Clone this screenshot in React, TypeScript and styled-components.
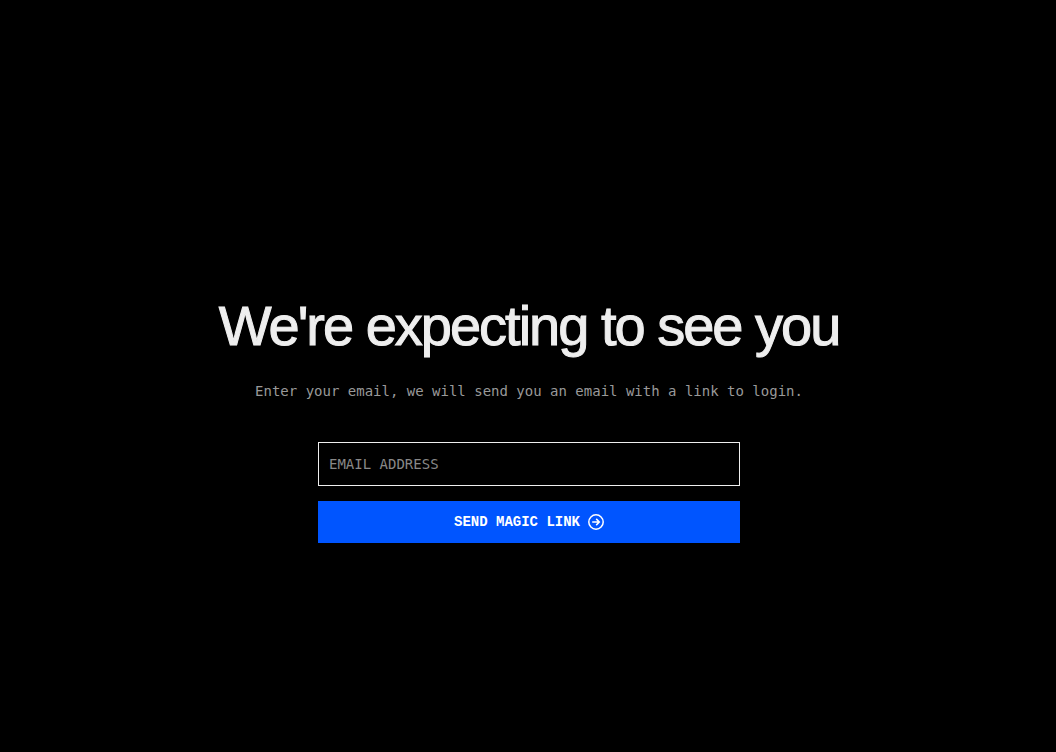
import React from "react";
import styled, { createGlobalStyle } from "styled-components";

const GlobalStyle = createGlobalStyle`
  *, *::before, *::after { box-sizing: border-box; }
  body { margin: 0; background: #000; color: #eee; }
`;

const mono = `"DejaVu Sans Mono", "Liberation Mono", monospace`;

const Page = styled.main`
  min-height: 100vh;
  display: flex;
  flex-direction: column;
  align-items: center;
  justify-content: center;
  padding: 80px 16px 0 18px;
  text-align: center;
`;

const Title = styled.h1`
  margin: 0;
  font: 400 56px/72px "Liberation Sans", Arial, sans-serif;
  letter-spacing: -2px;
  -webkit-text-stroke: 1px #eee;
  color: #eee;
`;

const Lead = styled.p`
  margin: 16px 0 38px;
  font: 400 14px/26px ${mono};
  color: #999;
`;

const Form = styled.form`
  width: 100%;
  max-width: 422px;
  display: flex;
  flex-direction: column;
  gap: 15px;
`;

const EmailInput = styled.input`
  width: 100%;
  height: 44px;
  padding: 0 10px;
  border: 1px solid #eee;
  border-radius: 0;
  outline: none;
  background: #000;
  color: #eee;
  font: 400 14px/20px ${mono};
  &::placeholder { color: #888; opacity: 1; }
`;

const SubmitButton = styled.button`
  display: flex;
  align-items: center;
  justify-content: center;
  gap: 8px;
  height: 42px;
  padding: 0;
  border: 0;
  background: #05f;
  color: #fff;
  font: 700 14px/20px "Liberation Mono", monospace;
  cursor: pointer;
`;

const ArrowIcon = () => (
  <svg width="16" height="16" viewBox="0 0 16 16" fill="none" stroke="currentColor" strokeWidth="1.5" aria-hidden="true">
    <circle cx="8" cy="8" r="7.2" />
    <path d="M4.2 8h7M8.2 4.9l3.1 3.1-3.1 3.1" />
  </svg>
);

export default function App() {
  return (
    <>
      <GlobalStyle />
      <Page>
        <Title>We're expecting to see you</Title>
        <Lead>Enter your email, we will send you an email with a link to login.</Lead>
        <Form onSubmit={(e) => e.preventDefault()}>
          <EmailInput type="email" aria-label="Email address" placeholder="EMAIL ADDRESS" />
          <SubmitButton type="submit">
            SEND MAGIC LINK
            <ArrowIcon />
          </SubmitButton>
        </Form>
      </Page>
    </>
  );
}
